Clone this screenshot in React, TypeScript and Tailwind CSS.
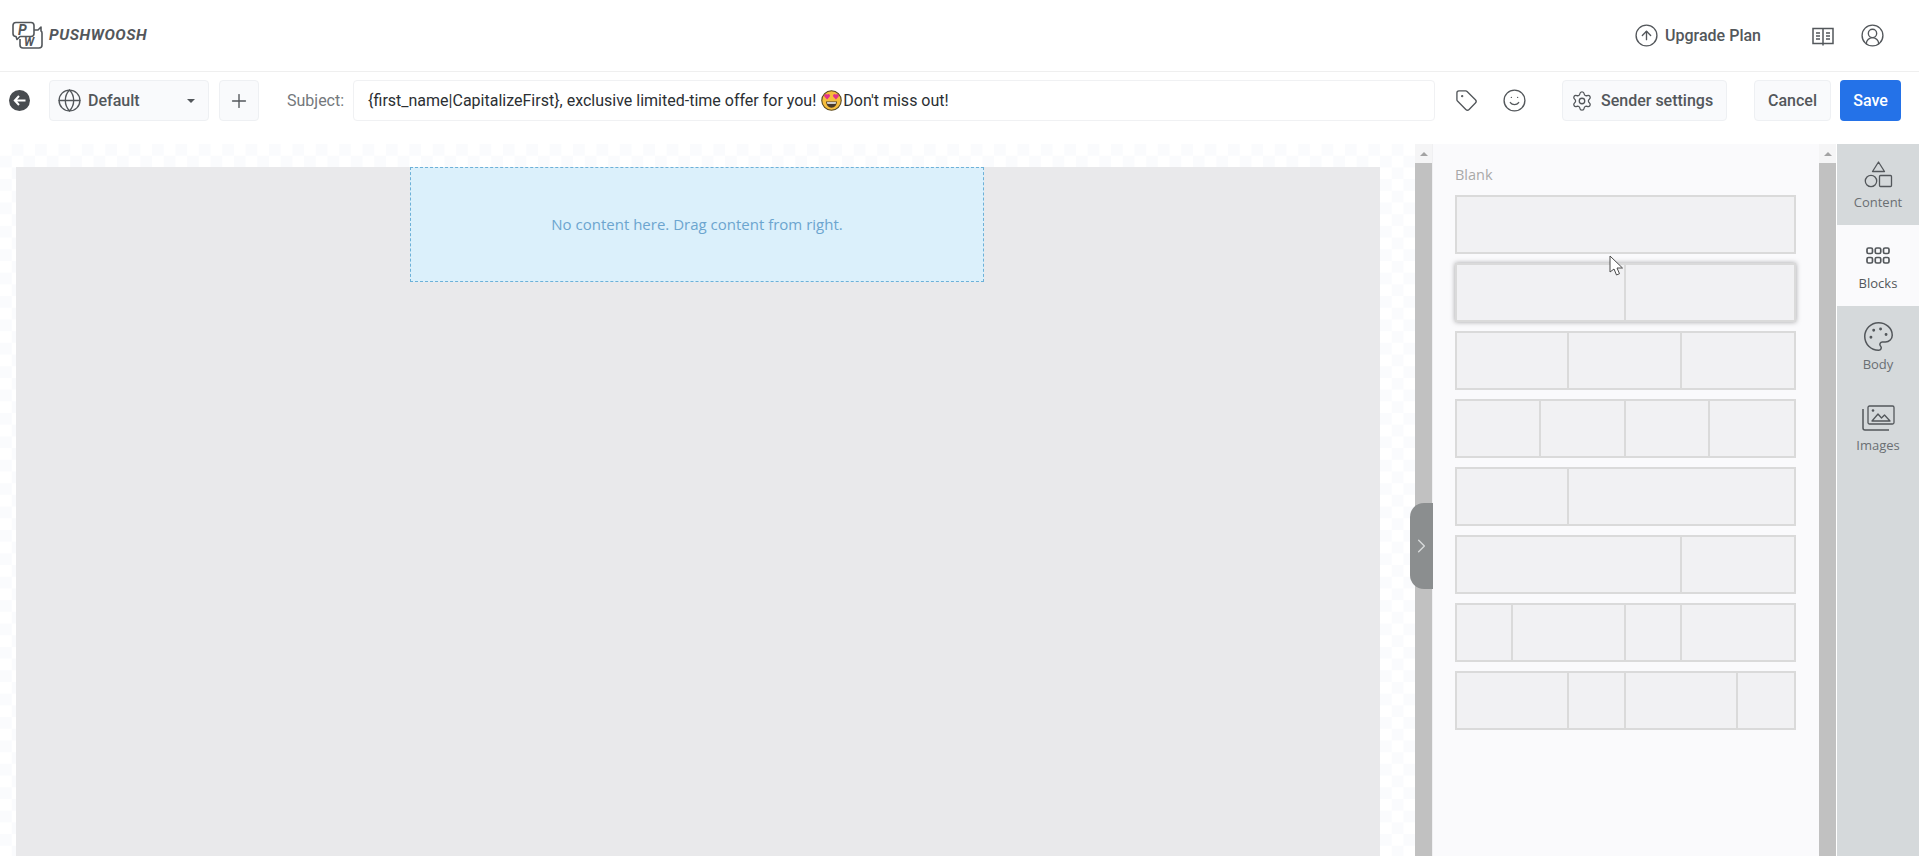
import { ChevronRight, CircleArrowUp, CircleUserRound, Globe, Palette, Plus, Settings, Smile, Tag } from "lucide-react"

const ROWS: { key: string; cols: string[] }[] = [
  { key: "a", cols: ["col-span-12"] },
  { key: "b", cols: ["col-span-6", "col-span-6"] },
  { key: "c", cols: ["col-span-4", "col-span-4", "col-span-4"] },
  { key: "d", cols: ["col-span-3", "col-span-3", "col-span-3", "col-span-3"] },
  { key: "e", cols: ["col-span-4", "col-span-8"] },
  { key: "f", cols: ["col-span-8", "col-span-4"] },
  { key: "g", cols: ["col-span-2", "col-span-4", "col-span-2", "col-span-4"] },
  { key: "h", cols: ["col-span-4", "col-span-2", "col-span-4", "col-span-2"] },
]

function Logo() {
  return (
    <svg width="32" height="30" viewBox="0 0 32 30" fill="none" stroke="#53575b" strokeWidth="1.6" strokeLinejoin="round">
      <path d="M5 1.500h15q3 0 3 3v8q0 3-3 3H9l-3 3-1-3q-3 0-3-3v-8q0-3 3-3z" />
      <path d="M23 9h4l3-3v4q1 .5 1 2v12q0 3-3 3H12q-3 0-3-3v-6" />
      <text x="7" y="13.500" fontFamily="Roboto, sans-serif" fontStyle="italic" fontWeight="700" fontSize="14" fill="#53575b" stroke="none">P</text>
      <text x="13" y="24.500" fontFamily="Roboto, sans-serif" fontStyle="italic" fontWeight="700" fontSize="12" fill="#53575b" stroke="none">W</text>
    </svg>
  )
}

function BookIcon() {
  return (
    <svg width="24" height="24" viewBox="0 0 24 24" fill="none" stroke="#53575b" strokeWidth="1.5">
      <path d="M12 4.500H2v15h10m0-15h10v15H12m0-15v17" />
      <path d="M5 9h4M5 12h4M5 15h4M15 9h4M15 12h4M15 15h4" strokeWidth="1.3" />
    </svg>
  )
}

function ShapesIcon() {
  return (
    <svg width="29" height="27" viewBox="0 0 29 27" fill="none" stroke="#53575b" strokeWidth="1.3">
      <path d="M14.500 1 8.500 10.500h12z" strokeLinejoin="round" />
      <circle cx="7" cy="20" r="5.700" />
      <rect x="15.500" y="14.500" width="12" height="11" rx="1" />
    </svg>
  )
}

function GridIcon() {
  return (
    <svg width="24" height="17" viewBox="0 0 24 17" fill="none" stroke="#53575b" strokeWidth="1.700">
      <rect x="1" y="1" width="5.500" height="5.500" rx="1.500" />
      <rect x="9.250" y="1" width="5.500" height="5.500" rx="1.500" />
      <rect x="17.500" y="1" width="5.500" height="5.500" rx="1.500" />
      <rect x="1" y="10.500" width="5.500" height="5.500" rx="1.500" />
      <rect x="9.250" y="10.500" width="5.500" height="5.500" rx="1.500" />
      <rect x="17.500" y="10.500" width="5.500" height="5.500" rx="1.500" />
    </svg>
  )
}

function ImagesIcon() {
  return (
    <svg width="33" height="26" viewBox="0 0 33 26" fill="none" stroke="#53575b" strokeWidth="1.300">
      <rect x="6" y="1" width="26" height="18" rx="1.500" />
      <path d="M1 4v19q0 2 2 2h24" strokeWidth="1.500" />
      <path d="M10 16l6-7 3.500 4 3-3 5.500 6z" strokeLinejoin="round" />
      <circle cx="11" cy="5.500" r="1.300" fill="#53575b" stroke="none" />
    </svg>
  )
}

// heart eyes face, the fonts here have no colour emoji
function HeartEyes() {
  return (
    <svg width="21" height="21" viewBox="0 0 19 19" className="shrink-0">
      <circle cx="9.500" cy="9.500" r="8.800" fill="#f6bd3c" stroke="#5a4a24" strokeWidth="1" />
      <path d="M5.500 8.500 3.200 6.200a1.500 1.500 0 0 1 2.300-2 1.500 1.500 0 0 1 2.300 2z" fill="#e0328c" />
      <path d="M13.500 8.500 11.200 6.200a1.500 1.500 0 0 1 2.300-2 1.500 1.500 0 0 1 2.300 2z" fill="#e0328c" />
      <path d="M4.500 10.500h10q-.5 5.500-5 5.500t-5-5.500z" fill="#4a3a2a" />
      <path d="M5.400 11h8.200l-.3 1.500H5.700z" fill="#fff" />
    </svg>
  )
}

function Scrollbar() {
  return (
    <div className="w-[17px] shrink-0 flex flex-col bg-white">
      <div className="h-[19px] flex items-center justify-center bg-[#f5f5f6]">
        <div className="w-0 h-0 border-x-[4px] border-x-transparent border-b-[4px] border-b-[#a3a3a3]" />
      </div>
      <div className="flex-1 bg-[#c1c1c1]" />
    </div>
  )
}

function SideTab({ label, active, children }: { label: string; active?: boolean; children: React.ReactNode }) {
  return (
    <div className={`h-[81px] pt-[14px] flex flex-col items-center ${active ? "bg-[#fafafc] text-[#53575b]" : "text-[#6a6f73]"}`}>
      <div className="h-[33px] flex items-center justify-center text-[#53575b]">{children}</div>
      <span className="mt-[2px] text-[13px] leading-[18px]">{label}</span>
    </div>
  )
}

export default function App() {
  return (
    <div className="h-[856px] w-full overflow-hidden flex flex-col bg-white font-['Roboto',sans-serif] text-[#53575b] pr-px">

      {/* top bar */}
      <div className="h-[72px] shrink-0 border-b border-[#efefef] flex items-center pl-[11px] pr-[34px]">
        <Logo />
        <span className="ml-[6px] font-bold italic text-[15.5px] tracking-[0.55px] text-[#53575b]">PUSHWOOSH</span>
        <div className="ml-auto flex items-center">
          <CircleArrowUp size={25} strokeWidth={1.3} />
          <span className="ml-[6px] text-[16px] font-medium">Upgrade Plan</span>
          <div className="ml-[50px]"><BookIcon /></div>
          <CircleUserRound size={25} strokeWidth={1.3} className="ml-[25px]" />
        </div>
      </div>

      {/* editor toolbar */}
      <div className="h-[72px] shrink-0 flex items-start pt-[8px] pl-[9px] pr-[18px]">
        <div className="mt-[10px] w-[21px] h-[21px] rounded-full bg-[#484c50] flex items-center justify-center">
          <svg width="13" height="11" viewBox="0 0 13 11" fill="none" stroke="#fff" strokeWidth="2">
            <path d="M12.500 5.500H2M6 1 1.800 5.500 6 10" />
          </svg>
        </div>
        <div className="ml-[19px] w-[160px] h-[41px] rounded-[4px] border border-[#eef0f3] bg-[#f9fafc] flex items-center pl-[7px] pr-[13px]">
          <Globe size={25} strokeWidth={1.3} />
          <span className="ml-[6px] text-[16px] font-medium">Default</span>
          <div className="ml-auto w-0 h-0 border-x-[4px] border-x-transparent border-t-[4px] border-t-[#53575b]" />
        </div>
        <div className="ml-[10px] w-[40px] h-[41px] rounded-[4px] border border-[#eef0f3] bg-[#f9fafc] flex items-center justify-center">
          <Plus size={22} strokeWidth={1.5} />
        </div>
        <span className="ml-[28px] h-[41px] flex items-center text-[16px] text-[#74787c]">Subject:</span>
        <div className="ml-[9px] flex-1 h-[41px] rounded-[4px] border border-[#f0f1f3] flex items-center pl-[14px] text-[16px] text-[#2b2f33]">
          {"{first_name|CapitalizeFirst}, exclusive limited-time offer for you!"}
          <span className="ml-[5px] mr-[1px]"><HeartEyes /></span>
          {"Don't miss out!"}
        </div>
        <Tag size={23} strokeWidth={1.4} className="ml-[20px] mt-[9px]" />
        <Smile size={25} strokeWidth={1.3} className="ml-[24px] mt-[8px]" />
        <div className="ml-[35px] w-[165px] h-[41px] rounded-[4px] border border-[#eef0f3] bg-[#f9fafc] flex items-center pl-[8px]">
          <Settings size={22} strokeWidth={1.4} />
          <span className="ml-[8px] text-[16px] font-medium">Sender settings</span>
        </div>
        <div className="ml-[27px] w-[77px] h-[41px] rounded-[4px] border border-[#eef0f3] bg-[#f9fafc] flex items-center justify-center text-[16px] font-medium">
          Cancel
        </div>
        <div className="ml-[9px] w-[61px] h-[41px] rounded-[4px] bg-[#2472e8] flex items-center justify-center text-[16px] font-medium text-white">
          Save
        </div>
      </div>

      {/* body */}
      <div className="relative flex-1 min-h-0 flex">
        <div className="w-[1415px] shrink-0 pl-[16px] pr-[35px] pt-[23px] bg-[conic-gradient(#fafbfd_25%,#ffffff_0_50%,#fafbfd_0_75%,#ffffff_0)] bg-[length:23.4px_23.4px]">
          <div className="h-full bg-[#e9e9eb] font-['Open_Sans',sans-serif] pr-[2px]">
            <div className="mx-auto w-[574px] h-[115px] bg-[#dbf0fb] border border-dashed border-[#6db1d8] flex items-center justify-center text-[15px] text-[#6ca5cf]">
              No content here. Drag content from right.
            </div>
          </div>
        </div>

        <Scrollbar />

        <div className="w-[387px] shrink-0 bg-[#fafafc] border-l border-[#f0f0f2] pl-[22px] pr-[23px] pt-[21px] font-['Open_Sans',sans-serif]">
          <div className="text-[14.5px] leading-[20px] text-[#a9a9a9] mb-[10px]">Blank</div>
          <div className="flex flex-col gap-[9px]">
            {ROWS.map((row) => (
              <div
                key={row.key}
                className={`h-[59px] grid grid-cols-12 border-2 border-[#dadada] bg-[#f1f1f3] divide-x-2 divide-[#dadada] ${row.key === "b" ? "shadow-[0_0_5px_rgba(0,0,0,0.35)]" : ""}`}
              >
                {row.cols.map((col, i) => (
                  <div key={i} className={col} />
                ))}
              </div>
            ))}
          </div>
        </div>

        <Scrollbar />

        <div className="flex-1 bg-[#d5d9db] border-l border-white font-['Open_Sans',sans-serif]">
          <SideTab label="Content"><ShapesIcon /></SideTab>
          <SideTab label="Blocks" active><GridIcon /></SideTab>
          <SideTab label="Body"><Palette size={33} strokeWidth={1.1} /></SideTab>
          <SideTab label="Images"><ImagesIcon /></SideTab>
        </div>

        {/* panel collapse handle */}
        <div className="absolute left-[1410px] top-[359px] w-[23px] h-[86px] rounded-l-[14px] bg-[#8b8e8f] flex items-center justify-center">
          <ChevronRight size={28} strokeWidth={1.4} className="text-[#d8dadb]" />
        </div>

        {/* mouse pointer */}
        <svg className="absolute left-[1609px] top-[111px]" width="15" height="22" viewBox="0 0 15 22" fill="#fff" stroke="#4a4a4a" strokeWidth="1">
          <path d="M1 1v16l4-3 2.500 6 3-1.300L8 13h5.500z" />
        </svg>
      </div>
    </div>
  )
}
